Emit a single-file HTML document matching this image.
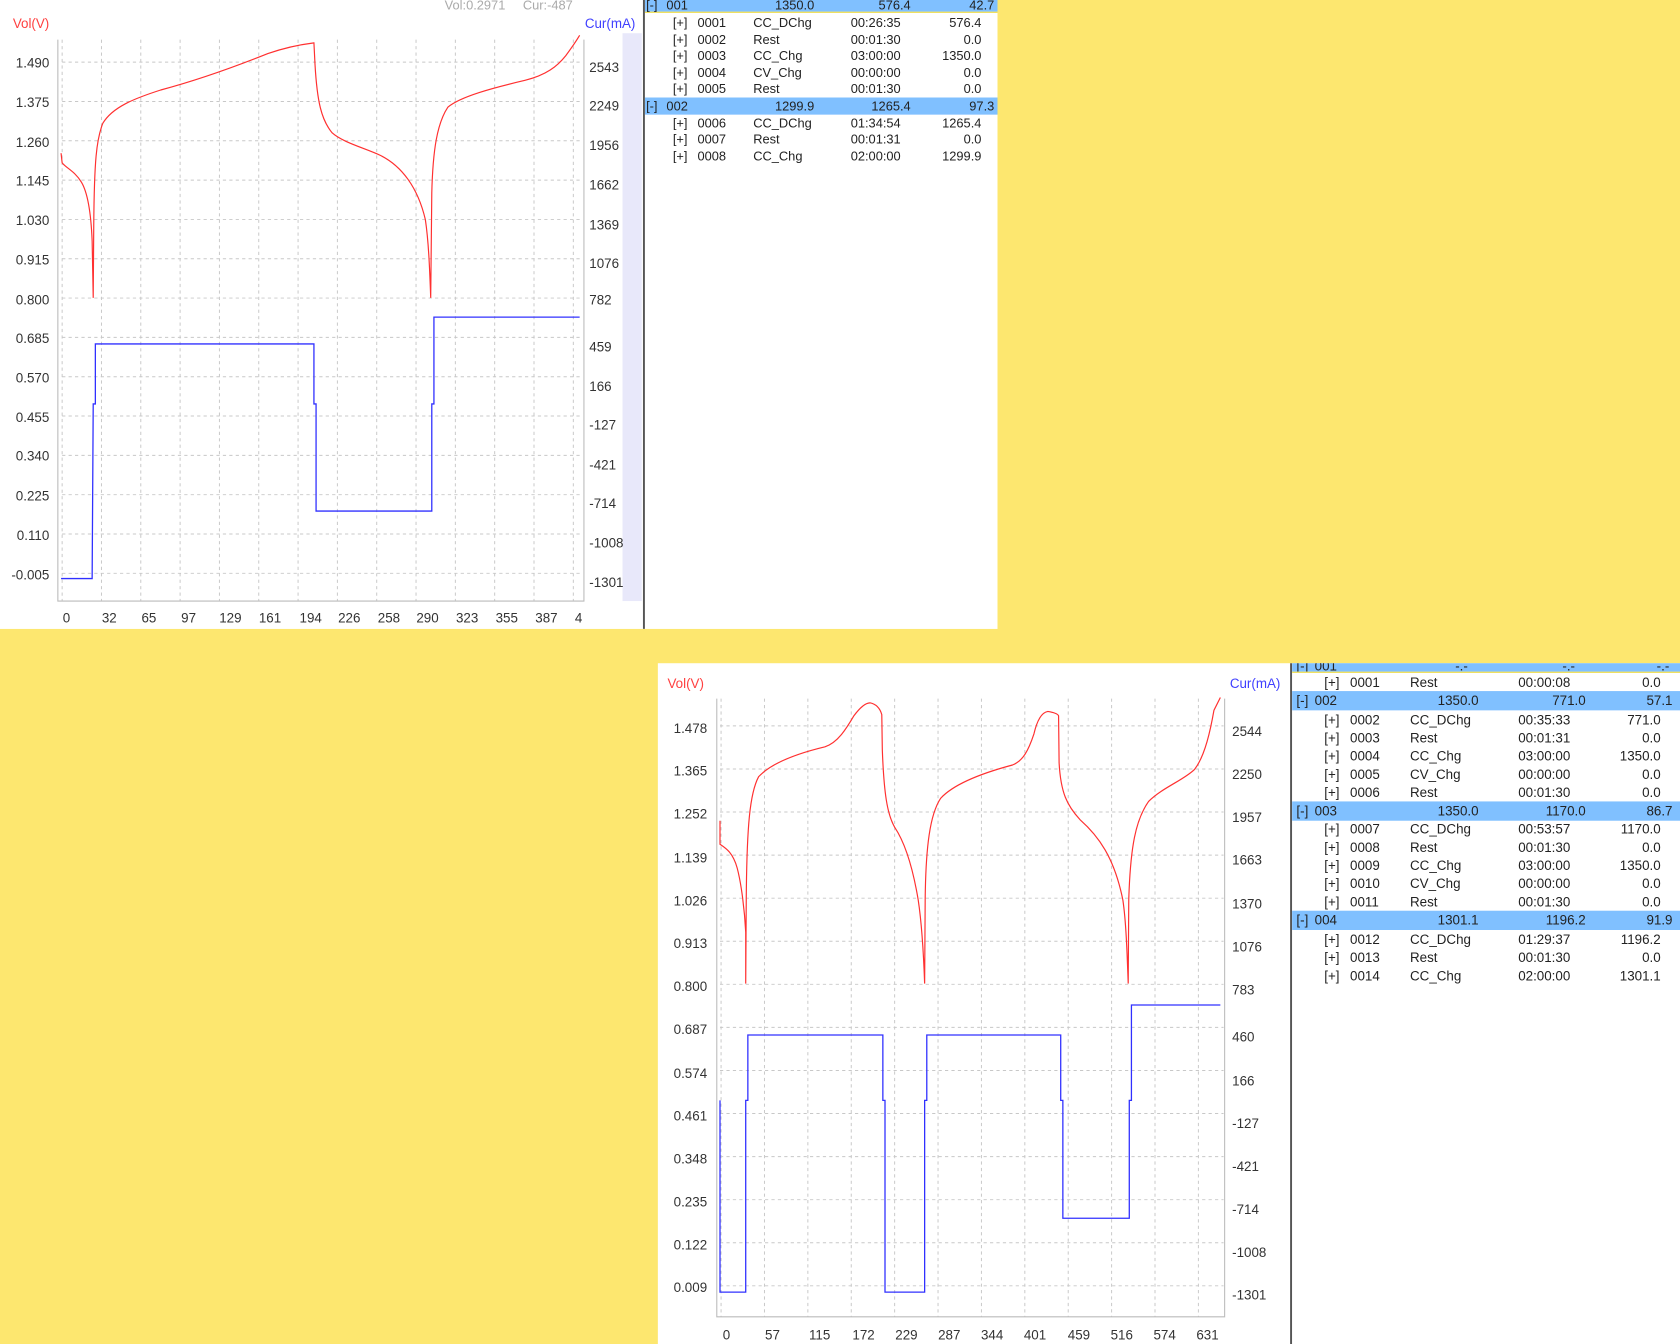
<!DOCTYPE html>
<html><head><meta charset="utf-8">
<style>
html,body{margin:0;padding:0;background:#fde76f;}
svg{display:block;}
text{font-family:"Liberation Sans",sans-serif;}
</style></head><body>
<svg width="1680" height="1344" viewBox="0 0 1568 1254.4" preserveAspectRatio="none" xmlns="http://www.w3.org/2000/svg">
<defs><clipPath id="c1"><rect x="1206" y="619" width="362" height="8"/></clipPath></defs>
<rect x="0" y="0" width="1568" height="1254.4" fill="#fde76f"/>
<!-- TOP PANEL -->
<rect x="0" y="0" width="931" height="587" fill="#ffffff"/>
<rect x="581" y="31" width="18" height="530" fill="#e8e8fa"/>
<line x1="601" y1="0" x2="601" y2="587" stroke="#555" stroke-width="1.8"/>
<g stroke="#c8c8c8" stroke-width="0.9" stroke-dasharray="3,3">
<line x1="58" y1="58" x2="541" y2="58"/><line x1="58" y1="94.7" x2="541" y2="94.7"/><line x1="58" y1="131.4" x2="541" y2="131.4"/><line x1="58" y1="168.1" x2="541" y2="168.1"/><line x1="58" y1="204.8" x2="541" y2="204.8"/><line x1="58" y1="241.5" x2="541" y2="241.5"/><line x1="58" y1="278.2" x2="541" y2="278.2"/><line x1="58" y1="314.9" x2="541" y2="314.9"/><line x1="58" y1="351.6" x2="541" y2="351.6"/><line x1="58" y1="388.3" x2="541" y2="388.3"/><line x1="58" y1="425" x2="541" y2="425"/><line x1="58" y1="461.7" x2="541" y2="461.7"/><line x1="58" y1="498.4" x2="541" y2="498.4"/><line x1="58" y1="535.1" x2="541" y2="535.1"/>
<line x1="58" y1="37" x2="58" y2="561"/><line x1="94.7" y1="37" x2="94.7" y2="561"/><line x1="131.4" y1="37" x2="131.4" y2="561"/><line x1="168.1" y1="37" x2="168.1" y2="561"/><line x1="204.8" y1="37" x2="204.8" y2="561"/><line x1="241.5" y1="37" x2="241.5" y2="561"/><line x1="278.2" y1="37" x2="278.2" y2="561"/><line x1="314.9" y1="37" x2="314.9" y2="561"/><line x1="351.6" y1="37" x2="351.6" y2="561"/><line x1="388.3" y1="37" x2="388.3" y2="561"/><line x1="425" y1="37" x2="425" y2="561"/><line x1="461.7" y1="37" x2="461.7" y2="561"/><line x1="498.4" y1="37" x2="498.4" y2="561"/><line x1="535.1" y1="37" x2="535.1" y2="561"/>
</g>
<g stroke="#bbb" stroke-width="1" fill="none">
<polyline points="54,37 54,561 545,561 545,37"/>
</g>
<g fill="#333" font-size="12.5" text-anchor="end">
<text x="46" y="63">1.490</text><text x="46" y="100">1.375</text><text x="46" y="137">1.260</text><text x="46" y="173">1.145</text><text x="46" y="210">1.030</text><text x="46" y="247">0.915</text><text x="46" y="284">0.800</text><text x="46" y="320">0.685</text><text x="46" y="357">0.570</text><text x="46" y="394">0.455</text><text x="46" y="430">0.340</text><text x="46" y="467">0.225</text><text x="46" y="504">0.110</text><text x="46" y="541">-0.005</text>
</g>
<g fill="#333" font-size="12.5">
<text x="550" y="67">2543</text><text x="550" y="103">2249</text><text x="550" y="140">1956</text><text x="550" y="177">1662</text><text x="550" y="214">1369</text><text x="550" y="250">1076</text><text x="550" y="284">782</text><text x="550" y="328">459</text><text x="550" y="365">166</text><text x="550" y="401">-127</text><text x="550" y="438">-421</text><text x="550" y="474">-714</text><text x="550" y="511">-1008</text><text x="550" y="548">-1301</text>
</g>
<g fill="#333" font-size="12.5" text-anchor="middle">
<text x="62" y="581">0</text><text x="102" y="581">32</text><text x="139" y="581">65</text><text x="176" y="581">97</text><text x="215" y="581">129</text><text x="252" y="581">161</text><text x="290" y="581">194</text><text x="326" y="581">226</text><text x="363" y="581">258</text><text x="399" y="581">290</text><text x="436" y="581">323</text><text x="473" y="581">355</text><text x="510" y="581">387</text><text x="540" y="581">4</text>
</g>
<text x="12" y="26" fill="#ff4040" font-size="12.5">Vol(V)</text>
<text x="593" y="26" fill="#4040ff" font-size="12.5" text-anchor="end">Cur(mA)</text>
<text x="415" y="9" fill="#aaa" font-size="12">Vol:0.2971</text>
<text x="488" y="9" fill="#aaa" font-size="12">Cur:-487</text>
<path fill="none" stroke="#ff3030" stroke-width="1.1" d="M57,143 L58,152 C62,157 70,160 76,170 C82,180 85,200 86,225 L87,278 L87.5,210 C88,150 90,130 96,115 C105,100 125,92 150,84 C180,76 210,66 250,50 C270,43 285,41 293,40 L294,60 C296,95 300,112 310,124 C320,133 340,138 355,145 C375,155 390,175 397,205 C400,225 401,250 402,278 L403,180 C404,140 408,115 418,100 C430,90 460,82 490,75 C510,70 520,62 528,52 C534,44 538,38 541,33"/>
<polyline fill="none" stroke="#3030ff" stroke-width="1.2" points="57,540 86,540 87,377 89,377 89,321 293,321 293,377 295,377 295,477 403,477 403,377 405,377 405,296 541,296"/>
<!-- top table -->
<rect x="602" y="0" width="329" height="11" fill="#80c0ff"/>
<line x1="602" y1="11.5" x2="931" y2="11.5" stroke="#f0e060" stroke-width="1.2"/>
<rect x="602" y="91" width="329" height="16" fill="#80c0ff"/>
<g font-size="12" fill="#222">
<text x="603" y="9">[-]</text><text x="622" y="9">001</text>
<text x="760" y="9" text-anchor="end">1350.0</text><text x="850" y="9" text-anchor="end">576.4</text><text x="928" y="9" text-anchor="end">42.7</text>
<text x="603" y="103">[-]</text><text x="622" y="103">002</text>
<text x="760" y="103" text-anchor="end">1299.9</text><text x="850" y="103" text-anchor="end">1265.4</text><text x="928" y="103" text-anchor="end">97.3</text>
<text x="628" y="25">[+]</text><text x="651" y="25">0001</text><text x="703" y="25">CC_DChg</text><text x="794" y="25">00:26:35</text><text x="916" y="25" text-anchor="end">576.4</text>
<text x="628" y="41">[+]</text><text x="651" y="41">0002</text><text x="703" y="41">Rest</text><text x="794" y="41">00:01:30</text><text x="916" y="41" text-anchor="end">0.0</text>
<text x="628" y="56">[+]</text><text x="651" y="56">0003</text><text x="703" y="56">CC_Chg</text><text x="794" y="56">03:00:00</text><text x="916" y="56" text-anchor="end">1350.0</text>
<text x="628" y="72">[+]</text><text x="651" y="72">0004</text><text x="703" y="72">CV_Chg</text><text x="794" y="72">00:00:00</text><text x="916" y="72" text-anchor="end">0.0</text>
<text x="628" y="87">[+]</text><text x="651" y="87">0005</text><text x="703" y="87">Rest</text><text x="794" y="87">00:01:30</text><text x="916" y="87" text-anchor="end">0.0</text>
<text x="628" y="119">[+]</text><text x="651" y="119">0006</text><text x="703" y="119">CC_DChg</text><text x="794" y="119">01:34:54</text><text x="916" y="119" text-anchor="end">1265.4</text>
<text x="628" y="134">[+]</text><text x="651" y="134">0007</text><text x="703" y="134">Rest</text><text x="794" y="134">00:01:31</text><text x="916" y="134" text-anchor="end">0.0</text>
<text x="628" y="150">[+]</text><text x="651" y="150">0008</text><text x="703" y="150">CC_Chg</text><text x="794" y="150">02:00:00</text><text x="916" y="150" text-anchor="end">1299.9</text>
</g>
<!-- BOTTOM PANEL -->
<rect x="614" y="619" width="954" height="636" fill="#ffffff"/>
<line x1="1205" y1="619" x2="1205" y2="1255" stroke="#555" stroke-width="1.8"/>
<g stroke="#c8c8c8" stroke-width="0.9" stroke-dasharray="3,3">
<line x1="672" y1="677.5" x2="1142" y2="677.5"/><line x1="672" y1="717.7" x2="1142" y2="717.7"/><line x1="672" y1="757.9" x2="1142" y2="757.9"/><line x1="672" y1="798.1" x2="1142" y2="798.1"/><line x1="672" y1="838.3" x2="1142" y2="838.3"/><line x1="672" y1="878.5" x2="1142" y2="878.5"/><line x1="672" y1="918.7" x2="1142" y2="918.7"/><line x1="672" y1="958.9" x2="1142" y2="958.9"/><line x1="672" y1="999.1" x2="1142" y2="999.1"/><line x1="672" y1="1039.3" x2="1142" y2="1039.3"/><line x1="672" y1="1079.5" x2="1142" y2="1079.5"/><line x1="672" y1="1119.7" x2="1142" y2="1119.7"/><line x1="672" y1="1159.9" x2="1142" y2="1159.9"/><line x1="672" y1="1200.1" x2="1142" y2="1200.1"/>
<line x1="673" y1="652" x2="673" y2="1229"/><line x1="713.5" y1="652" x2="713.5" y2="1229"/><line x1="754" y1="652" x2="754" y2="1229"/><line x1="794.5" y1="652" x2="794.5" y2="1229"/><line x1="835" y1="652" x2="835" y2="1229"/><line x1="875.5" y1="652" x2="875.5" y2="1229"/><line x1="916" y1="652" x2="916" y2="1229"/><line x1="956.5" y1="652" x2="956.5" y2="1229"/><line x1="997" y1="652" x2="997" y2="1229"/><line x1="1037.5" y1="652" x2="1037.5" y2="1229"/><line x1="1078" y1="652" x2="1078" y2="1229"/><line x1="1118.5" y1="652" x2="1118.5" y2="1229"/>
</g>
<g stroke="#bbb" stroke-width="1" fill="none">
<polyline points="669,652 669,1229 1143,1229 1143,652"/>
</g>
<g fill="#333" font-size="12.5" text-anchor="end">
<text x="660" y="684">1.478</text><text x="660" y="724">1.365</text><text x="660" y="764">1.252</text><text x="660" y="805">1.139</text><text x="660" y="845">1.026</text><text x="660" y="885">0.913</text><text x="660" y="925">0.800</text><text x="660" y="965">0.687</text><text x="660" y="1006">0.574</text><text x="660" y="1046">0.461</text><text x="660" y="1086">0.348</text><text x="660" y="1126">0.235</text><text x="660" y="1166">0.122</text><text x="660" y="1206">0.009</text>
</g>
<g fill="#333" font-size="12.5">
<text x="1150" y="687">2544</text><text x="1150" y="727">2250</text><text x="1150" y="767">1957</text><text x="1150" y="807">1663</text><text x="1150" y="848">1370</text><text x="1150" y="888">1076</text><text x="1150" y="928">783</text><text x="1150" y="972">460</text><text x="1150" y="1013">166</text><text x="1150" y="1053">-127</text><text x="1150" y="1093">-421</text><text x="1150" y="1133">-714</text><text x="1150" y="1173">-1008</text><text x="1150" y="1213">-1301</text>
</g>
<g fill="#333" font-size="12.5" text-anchor="middle">
<text x="678" y="1250">0</text><text x="721" y="1250">57</text><text x="765" y="1250">115</text><text x="806" y="1250">172</text><text x="846" y="1250">229</text><text x="886" y="1250">287</text><text x="926" y="1250">344</text><text x="966" y="1250">401</text><text x="1007" y="1250">459</text><text x="1047" y="1250">516</text><text x="1087" y="1250">574</text><text x="1127" y="1250">631</text>
</g>
<text x="623" y="642" fill="#ff4040" font-size="12.5">Vol(V)</text>
<text x="1195" y="642" fill="#4040ff" font-size="12.5" text-anchor="end">Cur(mA)</text>
<path fill="none" stroke="#ff3030" stroke-width="1.1" d="M672,766 L672,788 C678,792 684,796 688,810 C692,825 695,850 696,870 L696,918 L696.5,840 C697,770 700,740 708,725 C720,712 745,703 770,697 C782,693 790,680 797,668 C803,660 808,656 812,656 C817,657 821,660 823,667 L823.5,700 C825,740 828,760 835,772 C845,787 852,810 857,840 C860,860 862,890 863,918 L863.5,840 C864,790 868,760 878,745 C890,732 915,722 945,714 C955,710 960,700 965,685 C968,672 972,665 978,664 C984,665 987,666 988,668 L988.5,712 C990,740 996,752 1008,765 C1025,780 1040,800 1048,840 C1051,860 1052,890 1053,918 L1053.5,840 C1055,790 1060,765 1072,748 C1085,735 1105,728 1115,718 C1125,705 1130,680 1133,663 L1139,651"/>
<polyline fill="none" stroke="#3030ff" stroke-width="1.2" points="672,1027 672,1206 696,1206 696,1027 698,1027 698,966 824,966 824,1027 826,1027 826,1206 863,1206 863,1027 865,1027 865,966 990,966 990,1027 992,1027 992,1137 1054,1137 1054,1027 1056,1027 1056,938 1139,938"/>
<!-- bottom table -->
<rect x="1206" y="619" width="362" height="8" fill="#80c0ff"/>
<g clip-path="url(#c1)" font-size="12.5" fill="#222">
<text x="1210" y="626">[-]</text><text x="1227" y="626">001</text><text x="1370" y="626" text-anchor="end">-.-</text><text x="1470" y="626" text-anchor="end">-.-</text><text x="1558" y="626" text-anchor="end">-.-</text>
</g>
<line x1="1206" y1="627.5" x2="1568" y2="627.5" stroke="#f0e060" stroke-width="1.2"/>
<rect x="1206" y="645" width="362" height="18" fill="#80c0ff"/>
<rect x="1206" y="748" width="362" height="18" fill="#80c0ff"/>
<rect x="1206" y="850" width="362" height="18" fill="#80c0ff"/>
<g font-size="12.5" fill="#222">
<text x="1210" y="658">[-]</text><text x="1227" y="658">002</text><text x="1380" y="658" text-anchor="end">1350.0</text><text x="1480" y="658" text-anchor="end">771.0</text><text x="1561" y="658" text-anchor="end">57.1</text>
<text x="1210" y="761">[-]</text><text x="1227" y="761">003</text><text x="1380" y="761" text-anchor="end">1350.0</text><text x="1480" y="761" text-anchor="end">1170.0</text><text x="1561" y="761" text-anchor="end">86.7</text>
<text x="1210" y="863">[-]</text><text x="1227" y="863">004</text><text x="1380" y="863" text-anchor="end">1301.1</text><text x="1480" y="863" text-anchor="end">1196.2</text><text x="1561" y="863" text-anchor="end">91.9</text>
<text x="1236" y="641">[+]</text><text x="1260" y="641">0001</text><text x="1316" y="641">Rest</text><text x="1417" y="641">00:00:08</text><text x="1550" y="641" text-anchor="end">0.0</text>
<text x="1236" y="676">[+]</text><text x="1260" y="676">0002</text><text x="1316" y="676">CC_DChg</text><text x="1417" y="676">00:35:33</text><text x="1550" y="676" text-anchor="end">771.0</text>
<text x="1236" y="693">[+]</text><text x="1260" y="693">0003</text><text x="1316" y="693">Rest</text><text x="1417" y="693">00:01:31</text><text x="1550" y="693" text-anchor="end">0.0</text>
<text x="1236" y="710">[+]</text><text x="1260" y="710">0004</text><text x="1316" y="710">CC_Chg</text><text x="1417" y="710">03:00:00</text><text x="1550" y="710" text-anchor="end">1350.0</text>
<text x="1236" y="727">[+]</text><text x="1260" y="727">0005</text><text x="1316" y="727">CV_Chg</text><text x="1417" y="727">00:00:00</text><text x="1550" y="727" text-anchor="end">0.0</text>
<text x="1236" y="744">[+]</text><text x="1260" y="744">0006</text><text x="1316" y="744">Rest</text><text x="1417" y="744">00:01:30</text><text x="1550" y="744" text-anchor="end">0.0</text>
<text x="1236" y="778">[+]</text><text x="1260" y="778">0007</text><text x="1316" y="778">CC_DChg</text><text x="1417" y="778">00:53:57</text><text x="1550" y="778" text-anchor="end">1170.0</text>
<text x="1236" y="795">[+]</text><text x="1260" y="795">0008</text><text x="1316" y="795">Rest</text><text x="1417" y="795">00:01:30</text><text x="1550" y="795" text-anchor="end">0.0</text>
<text x="1236" y="812">[+]</text><text x="1260" y="812">0009</text><text x="1316" y="812">CC_Chg</text><text x="1417" y="812">03:00:00</text><text x="1550" y="812" text-anchor="end">1350.0</text>
<text x="1236" y="829">[+]</text><text x="1260" y="829">0010</text><text x="1316" y="829">CV_Chg</text><text x="1417" y="829">00:00:00</text><text x="1550" y="829" text-anchor="end">0.0</text>
<text x="1236" y="846">[+]</text><text x="1260" y="846">0011</text><text x="1316" y="846">Rest</text><text x="1417" y="846">00:01:30</text><text x="1550" y="846" text-anchor="end">0.0</text>
<text x="1236" y="881">[+]</text><text x="1260" y="881">0012</text><text x="1316" y="881">CC_DChg</text><text x="1417" y="881">01:29:37</text><text x="1550" y="881" text-anchor="end">1196.2</text>
<text x="1236" y="898">[+]</text><text x="1260" y="898">0013</text><text x="1316" y="898">Rest</text><text x="1417" y="898">00:01:30</text><text x="1550" y="898" text-anchor="end">0.0</text>
<text x="1236" y="915">[+]</text><text x="1260" y="915">0014</text><text x="1316" y="915">CC_Chg</text><text x="1417" y="915">02:00:00</text><text x="1550" y="915" text-anchor="end">1301.1</text>
</g>
</svg>
</body></html>
